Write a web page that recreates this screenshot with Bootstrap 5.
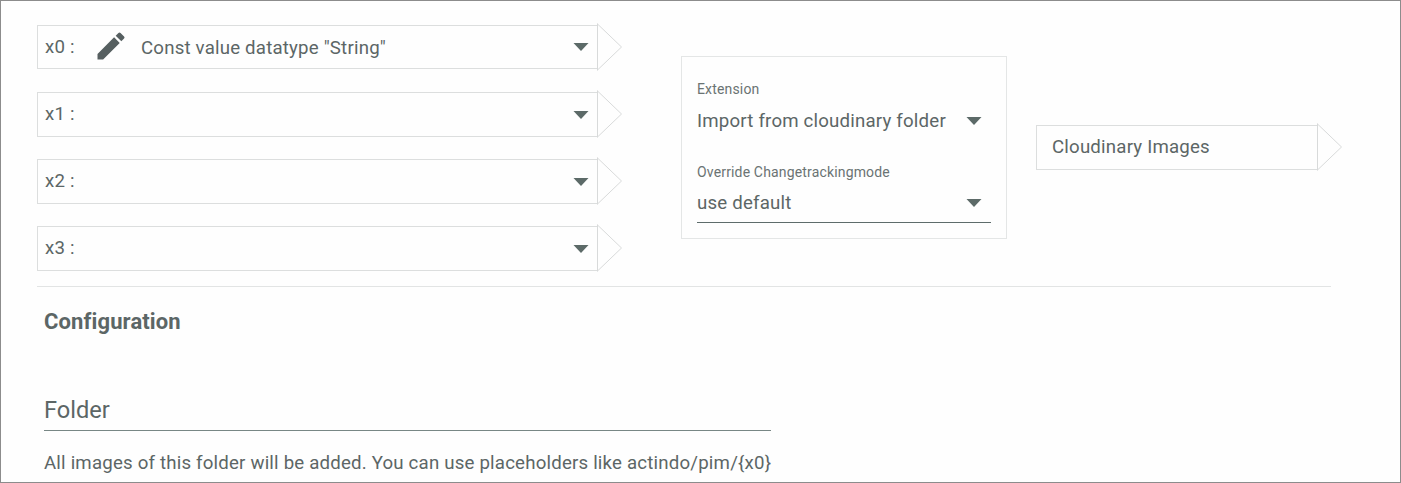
<!DOCTYPE html>
<html lang="en">
<head>
<meta charset="utf-8">
<meta name="viewport" content="width=device-width, initial-scale=1">
<title>Cloudinary Images</title>
<link href="https://cdn.jsdelivr.net/npm/bootstrap@5.3.0/dist/css/bootstrap.min.css" rel="stylesheet">
<style>
body { font-family: Roboto, "Liberation Sans", sans-serif; font-size: 18.67px; line-height: 24px; letter-spacing: .19px; color: #5c6666; background: #fefefe; }
.frame { height: 483px; border: 1px solid #8c8c8c; }
.flow { height: 270px; margin-left: 36px; padding-top: 24px; }
.inputs { width: 585px; gap: 22px; }
.slot { height: 45px; width: 562px; border: 1px solid #dcdede; border-right-color: transparent; padding: 0 8px 0 7px; }
.slot.first { height: 44px; margin-bottom: 1px; }
.slot.first .tag { padding-bottom: 1px; }
.slot .tag { width: 54px; padding-bottom: 2px; }
.tip { display: block; width: 25px; height: 48px; margin: -2px 0 -2px -1px; flex: none; fill: none; stroke: #d8dada; stroke-width: 1; }
.caret { display: block; width: 16px; height: 8px; fill: #5c6a68; flex: none; }
.pencil { width: 36px; height: 36px; fill: #565f60; margin: -2px 12px 0 -6px; }
.label-text { padding-top: 1px; }
.ext { width: 326px; height: 183px; margin: 31px 0 0 59px; padding: 20px 15px 0; border: 1px solid #e4e6e6; }
.cap { font-size: 14px; letter-spacing: .16px; color: #6a7373; }
.pick { height: 32px; margin-top: 4px; padding-right: 9px; }
.cap.second { margin-top: 23px; }
.pick.lined { height: 39px; margin-top: 0; border-bottom: 1px solid #5e6c6b; }
.result { margin: 100px 0 0 29px; }
.result .slot { width: 282px; padding: 0 0 2px 15px; }
.rule { width: 1294px; height: 1px; margin: 15px 0 0 36px; background: #e2e4e4; }
.conf { margin-left: 43px; }
.conf h2 { font-size: 22px; line-height: 28px; font-weight: 700; letter-spacing: .12px; margin: 21px 0 0; }
.field { width: 727px; height: 36px; margin-top: 59px; font-size: 23.6px; line-height: 30px; letter-spacing: 0; border-bottom: 1px solid #788785; }
.hint { margin-top: 20px; white-space: nowrap; }
</style>
</head>
<body class="overflow-hidden">
<svg class="d-none">
  <symbol id="tip" viewBox="0 0 25 48"><path d="M.5 .5V47.5M.5 1L24.5 24L.5 47"/></symbol>
  <symbol id="caret" viewBox="0 0 16 8"><path d="M.5 0h15L8 8z"/></symbol>
</svg>
<main class="frame overflow-hidden">
  <section class="flow d-flex align-items-start">
    <div class="inputs d-flex flex-column">
      <div class="d-flex">
        <div class="slot first d-flex align-items-center">
          <span class="tag">x0 :</span>
          <svg class="pencil" viewBox="0 0 24 24"><path d="M3 17.25V21h3.75L17.81 9.94l-3.75-3.75L3 17.25zM20.71 7.04a1 1 0 0 0 0-1.41l-2.34-2.34a1 1 0 0 0-1.41 0l-1.83 1.83 3.75 3.75 1.83-1.83z"/></svg>
          <span class="label-text">Const value datatype "String"</span>
          <svg class="caret ms-auto"><use href="#caret"/></svg>
        </div>
        <svg class="tip"><use href="#tip"/></svg>
      </div>
      <div class="d-flex">
        <div class="slot d-flex align-items-center"><span class="tag">x1 :</span><svg class="caret ms-auto"><use href="#caret"/></svg></div>
        <svg class="tip"><use href="#tip"/></svg>
      </div>
      <div class="d-flex">
        <div class="slot d-flex align-items-center"><span class="tag">x2 :</span><svg class="caret ms-auto"><use href="#caret"/></svg></div>
        <svg class="tip"><use href="#tip"/></svg>
      </div>
      <div class="d-flex">
        <div class="slot d-flex align-items-center"><span class="tag">x3 :</span><svg class="caret ms-auto"><use href="#caret"/></svg></div>
        <svg class="tip"><use href="#tip"/></svg>
      </div>
    </div>
    <div class="ext">
      <div class="cap">Extension</div>
      <div class="pick d-flex align-items-center justify-content-between"><span>Import from cloudinary folder</span><svg class="caret"><use href="#caret"/></svg></div>
      <div class="cap second">Override Changetrackingmode</div>
      <div class="pick lined d-flex align-items-center justify-content-between"><span>use default</span><svg class="caret"><use href="#caret"/></svg></div>
    </div>
    <div class="result d-flex">
      <div class="slot d-flex align-items-center">Cloudinary Images</div>
      <svg class="tip"><use href="#tip"/></svg>
    </div>
  </section>
  <div class="rule"></div>
  <section class="conf">
    <h2>Configuration</h2>
    <div class="field">Folder</div>
    <div class="hint">All images of this folder will be added. You can use placeholders like actindo/pim/{x0}</div>
  </section>
</main>
<script src="https://cdn.jsdelivr.net/npm/bootstrap@5.3.0/dist/js/bootstrap.bundle.min.js"></script>
</body>
</html>
